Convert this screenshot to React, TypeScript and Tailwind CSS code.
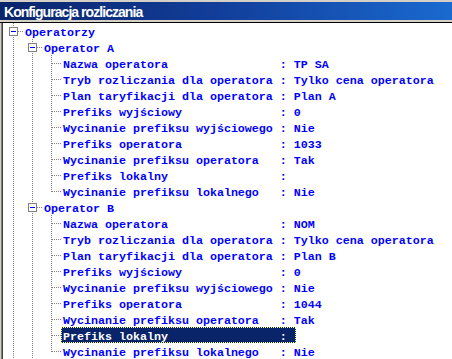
import React from 'react'

const mono = '"Liberation Mono", "Courier New", monospace'

type Guide = 'none' | 'line' | 'tee' | 'corner' | 'node'

type Row = {
  cells: Guide[]
  text: string
  selected?: boolean
}

const labels = [
  'Nazwa operatora',
  'Tryb rozliczania dla operatora',
  'Plan taryfikacji dla operatora',
  'Prefiks wyjściowy',
  'Wycinanie prefiksu wyjściowego',
  'Prefiks operatora',
  'Wycinanie prefiksu operatora',
  'Prefiks lokalny',
  'Wycinanie prefiksu lokalnego',
]

const operators = [
  { name: 'Operator A', values: ['TP SA', 'Tylko cena operatora', 'Plan A', '0', 'Nie', '1033', 'Tak', '', 'Nie'], selected: -1 },
  { name: 'Operator B', values: ['NOM', 'Tylko cena operatora', 'Plan B', '0', 'Nie', '1044', 'Tak', '', 'Nie'], selected: 7 },
]

const rows: Row[] = [{ cells: ['node'], text: 'Operatorzy' }]
operators.forEach((op) => {
  rows.push({ cells: ['line', 'node'], text: op.name })
  labels.forEach((label, i) => {
    rows.push({
      cells: ['line', 'line', i === labels.length - 1 ? 'corner' : 'tee'],
      text: label.padEnd(30) + ' : ' + op.values[i],
      selected: i === op.selected,
    })
  })
})

function GuideCell({ kind }: { kind: Guide }) {
  const dot = { stroke: '#808080', strokeDasharray: '1 1' }
  return (
    <svg width="19" height="16" viewBox="0 0 19 16" shapeRendering="crispEdges" className="shrink-0">
      {kind !== 'none' && (
        <line x1="9.5" y1="0" x2="9.5" y2={kind === 'corner' ? 9 : 16} {...dot} />
      )}
      {(kind === 'tee' || kind === 'corner' || kind === 'node') && (
        <line x1="10" y1="8.5" x2="19" y2="8.5" {...dot} />
      )}
      {kind === 'node' && (
        <>
          <rect x="5.5" y="4.5" width="8" height="8" fill="#fff" stroke="#808080" />
          <line x1="7" y1="8.5" x2="12" y2="8.5" stroke="#0000ff" />
        </>
      )}
    </svg>
  )
}

export default function App() {
  return (
    <div className="w-[452px] h-[359px] overflow-hidden bg-[#d4d0c8] flex flex-col">
      {/* Caption */}
      <div className="shrink-0 flex flex-col">
        <div className="h-[2px] bg-[#d4d0c8]" />
        <div
          className="h-[18px] bg-linear-to-r from-[#0a246a] via-[#123f9c] to-[#1a6ad0] pl-[4px] pt-[2px] leading-[16px] text-white font-bold text-[14px] tracking-[-0.95px] whitespace-nowrap"
          style={{ fontFamily: '"Liberation Sans", Arial, sans-serif' }}
        >
          Konfiguracja rozliczania
        </div>
        <div className="h-[2px] bg-[#d4d0c8]" />
        <div className="h-px bg-black" />
      </div>

      {/* Tree */}
      <div className="flex-1 border-l border-[#d4d0c8]">
        <div className="h-full border-l border-[#808080]">
          <div className="h-full border-l border-[#404040] bg-white pl-px">
            {rows.map((row, i) => (
              <div key={i} className="flex h-4">
                {row.cells.map((c, j) => (
                  <GuideCell key={j} kind={c} />
                ))}
                <span
                  className={`h-4 whitespace-pre border border-dotted px-px pt-[3px] leading-[12px] font-bold text-[11.67px] ${
                    row.selected ? 'bg-[#0a246a] text-white border-[#ffff80]' : 'border-transparent text-[#0000ff]'
                  }`}
                  style={{ fontFamily: mono }}
                >
                  {row.text}
                </span>
              </div>
            ))}
          </div>
        </div>
      </div>
    </div>
  )
}
